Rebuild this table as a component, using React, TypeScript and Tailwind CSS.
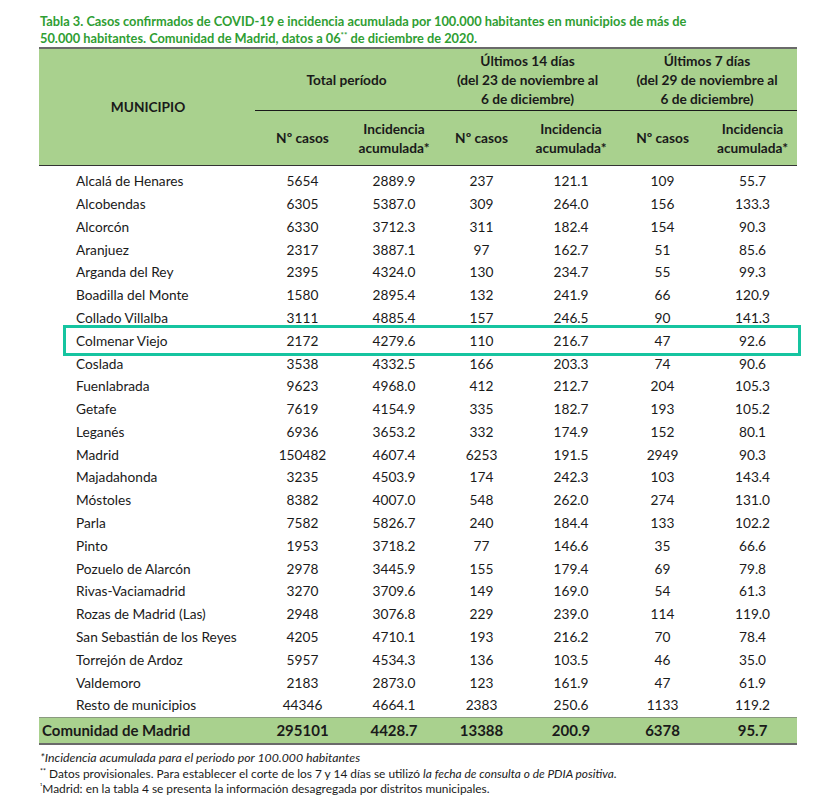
import React from 'react';

type Row = [string, string, string, string, string, string, string];

const rows: Row[] = [
  ['Alcalá de Henares', '5654', '2889.9', '237', '121.1', '109', '55.7'],
  ['Alcobendas', '6305', '5387.0', '309', '264.0', '156', '133.3'],
  ['Alcorcón', '6330', '3712.3', '311', '182.4', '154', '90.3'],
  ['Aranjuez', '2317', '3887.1', '97', '162.7', '51', '85.6'],
  ['Arganda del Rey', '2395', '4324.0', '130', '234.7', '55', '99.3'],
  ['Boadilla del Monte', '1580', '2895.4', '132', '241.9', '66', '120.9'],
  ['Collado Villalba', '3111', '4885.4', '157', '246.5', '90', '141.3'],
  ['Colmenar Viejo', '2172', '4279.6', '110', '216.7', '47', '92.6'],
  ['Coslada', '3538', '4332.5', '166', '203.3', '74', '90.6'],
  ['Fuenlabrada', '9623', '4968.0', '412', '212.7', '204', '105.3'],
  ['Getafe', '7619', '4154.9', '335', '182.7', '193', '105.2'],
  ['Leganés', '6936', '3653.2', '332', '174.9', '152', '80.1'],
  ['Madrid', '150482', '4607.4', '6253', '191.5', '2949', '90.3'],
  ['Majadahonda', '3235', '4503.9', '174', '242.3', '103', '143.4'],
  ['Móstoles', '8382', '4007.0', '548', '262.0', '274', '131.0'],
  ['Parla', '7582', '5826.7', '240', '184.4', '133', '102.2'],
  ['Pinto', '1953', '3718.2', '77', '146.6', '35', '66.6'],
  ['Pozuelo de Alarcón', '2978', '3445.9', '155', '179.4', '69', '79.8'],
  ['Rivas-Vaciamadrid', '3270', '3709.6', '149', '169.0', '54', '61.3'],
  ['Rozas de Madrid (Las)', '2948', '3076.8', '229', '239.0', '114', '119.0'],
  ['San Sebastián de los Reyes', '4205', '4710.1', '193', '216.2', '70', '78.4'],
  ['Torrejón de Ardoz', '5957', '4534.3', '136', '103.5', '46', '35.0'],
  ['Valdemoro', '2183', '2873.0', '123', '161.9', '47', '61.9'],
  ['Resto de municipios', '44346', '4664.1', '2383', '250.6', '1133', '119.2'],
];

const App: React.FC = () => {
  return (
    <div className="w-[826px] h-[806px] bg-white text-[#1a1a1a] font-['Lato','Liberation_Sans',sans-serif]">
      <div className="h-[47px] pt-[13px] pl-[40px] text-[12.8px] leading-[17px] font-bold text-[#2f9e33]">
        <p>Tabla 3. Casos confirmados de COVID-19 e incidencia acumulada por 100.000 habitantes en municipios de más de</p>
        <p>
          50.000 habitantes. Comunidad de Madrid, datos a 06
          <span className="relative -top-[5px] text-[8px] leading-none">**</span> de diciembre de 2020.
        </p>
      </div>

      <table className="ml-[39px] w-[758px] table-fixed border-collapse text-[13.7px]">
        <colgroup>
          <col className="w-[216px]" />
          <col className="w-[95px]" />
          <col className="w-[88px]" />
          <col className="w-[87px]" />
          <col className="w-[92px]" />
          <col className="w-[91px]" />
          <col className="w-[89px]" />
        </colgroup>
        <thead className="bg-[#a9d18e] font-bold leading-[19px]">
          <tr className="border-t-2 border-[#6a6a6a]">
            <th rowSpan={2} className="align-middle text-center border-b border-[#333] pl-[2px]">MUNICIPIO</th>
            <th colSpan={2} className="h-[62px] border-b border-[#1a1a1a] align-middle">Total período</th>
            <th colSpan={2} className="border-b border-[#1a1a1a] align-middle">
              Últimos 14 días
              <br />
              (del 23 de noviembre al
              <br />6 de diciembre)
            </th>
            <th colSpan={2} className="border-b border-[#1a1a1a] align-middle">
              Últimos 7 días
              <br />
              (del 29 de noviembre al
              <br />6 de diciembre)
            </th>
          </tr>
          <tr className="border-b border-[#333]">
            <th className="h-[55px] align-middle">Nº casos</th>
            <th className="align-middle">Incidencia<br />acumulada*</th>
            <th className="align-middle">Nº casos</th>
            <th className="align-middle">Incidencia<br />acumulada*</th>
            <th className="align-middle">Nº casos</th>
            <th className="align-middle">Incidencia<br />acumulada*</th>
          </tr>
        </thead>
        <tbody>
          <tr>
            <td colSpan={7} className="h-[5px] p-0" />
          </tr>
          {rows.map((r) => {
            const hl = r[0] === 'Colmenar Viejo';
            return (
              <tr key={r[0]} className="h-[22.8px]">
                <td className={`pl-[37px] ${hl ? 'relative' : ''}`}>
                  {hl && (
                    <div className="absolute left-[24px] top-[-5px] bottom-[-4px] w-[738px] border-[3px] border-[#16c4a0] pointer-events-none" />
                  )}
                  {r[0]}
                </td>
                {r.slice(1).map((v, i) => (
                  <td key={i} className="text-center">
                    {v}
                  </td>
                ))}
              </tr>
            );
          })}
          <tr className="h-[27px] bg-[#a9d18e] font-bold text-[15px] border-t border-[#8a9a80] border-b-2 border-b-[#6a6a6a]">
            <td className="pl-[3px]">Comunidad de Madrid</td>
            <td className="text-center">295101</td>
            <td className="text-center">4428.7</td>
            <td className="text-center">13388</td>
            <td className="text-center">200.9</td>
            <td className="text-center">6378</td>
            <td className="text-center">95.7</td>
          </tr>
        </tbody>
      </table>

      <div className="pl-[40px] pt-[5px] text-[11.9px] leading-[15.5px]">
        <p className="italic text-[12.3px]">*Incidencia acumulada para el periodo por 100.000 habitantes</p>
        <p>
          <span className="relative -top-[4px] text-[7px] leading-none">**</span> Datos provisionales. Para establecer el corte de los 7 y 14 días se utilizó{' '}
          <span className="italic">la fecha de consulta o de PDIA positiva.</span>
        </p>
        <p>
          <span className="relative -top-[4px] text-[7px] leading-none">¹</span>Madrid: en la tabla 4 se presenta la información desagregada por distritos municipales.
        </p>
      </div>
    </div>
  );
};

export default App;
